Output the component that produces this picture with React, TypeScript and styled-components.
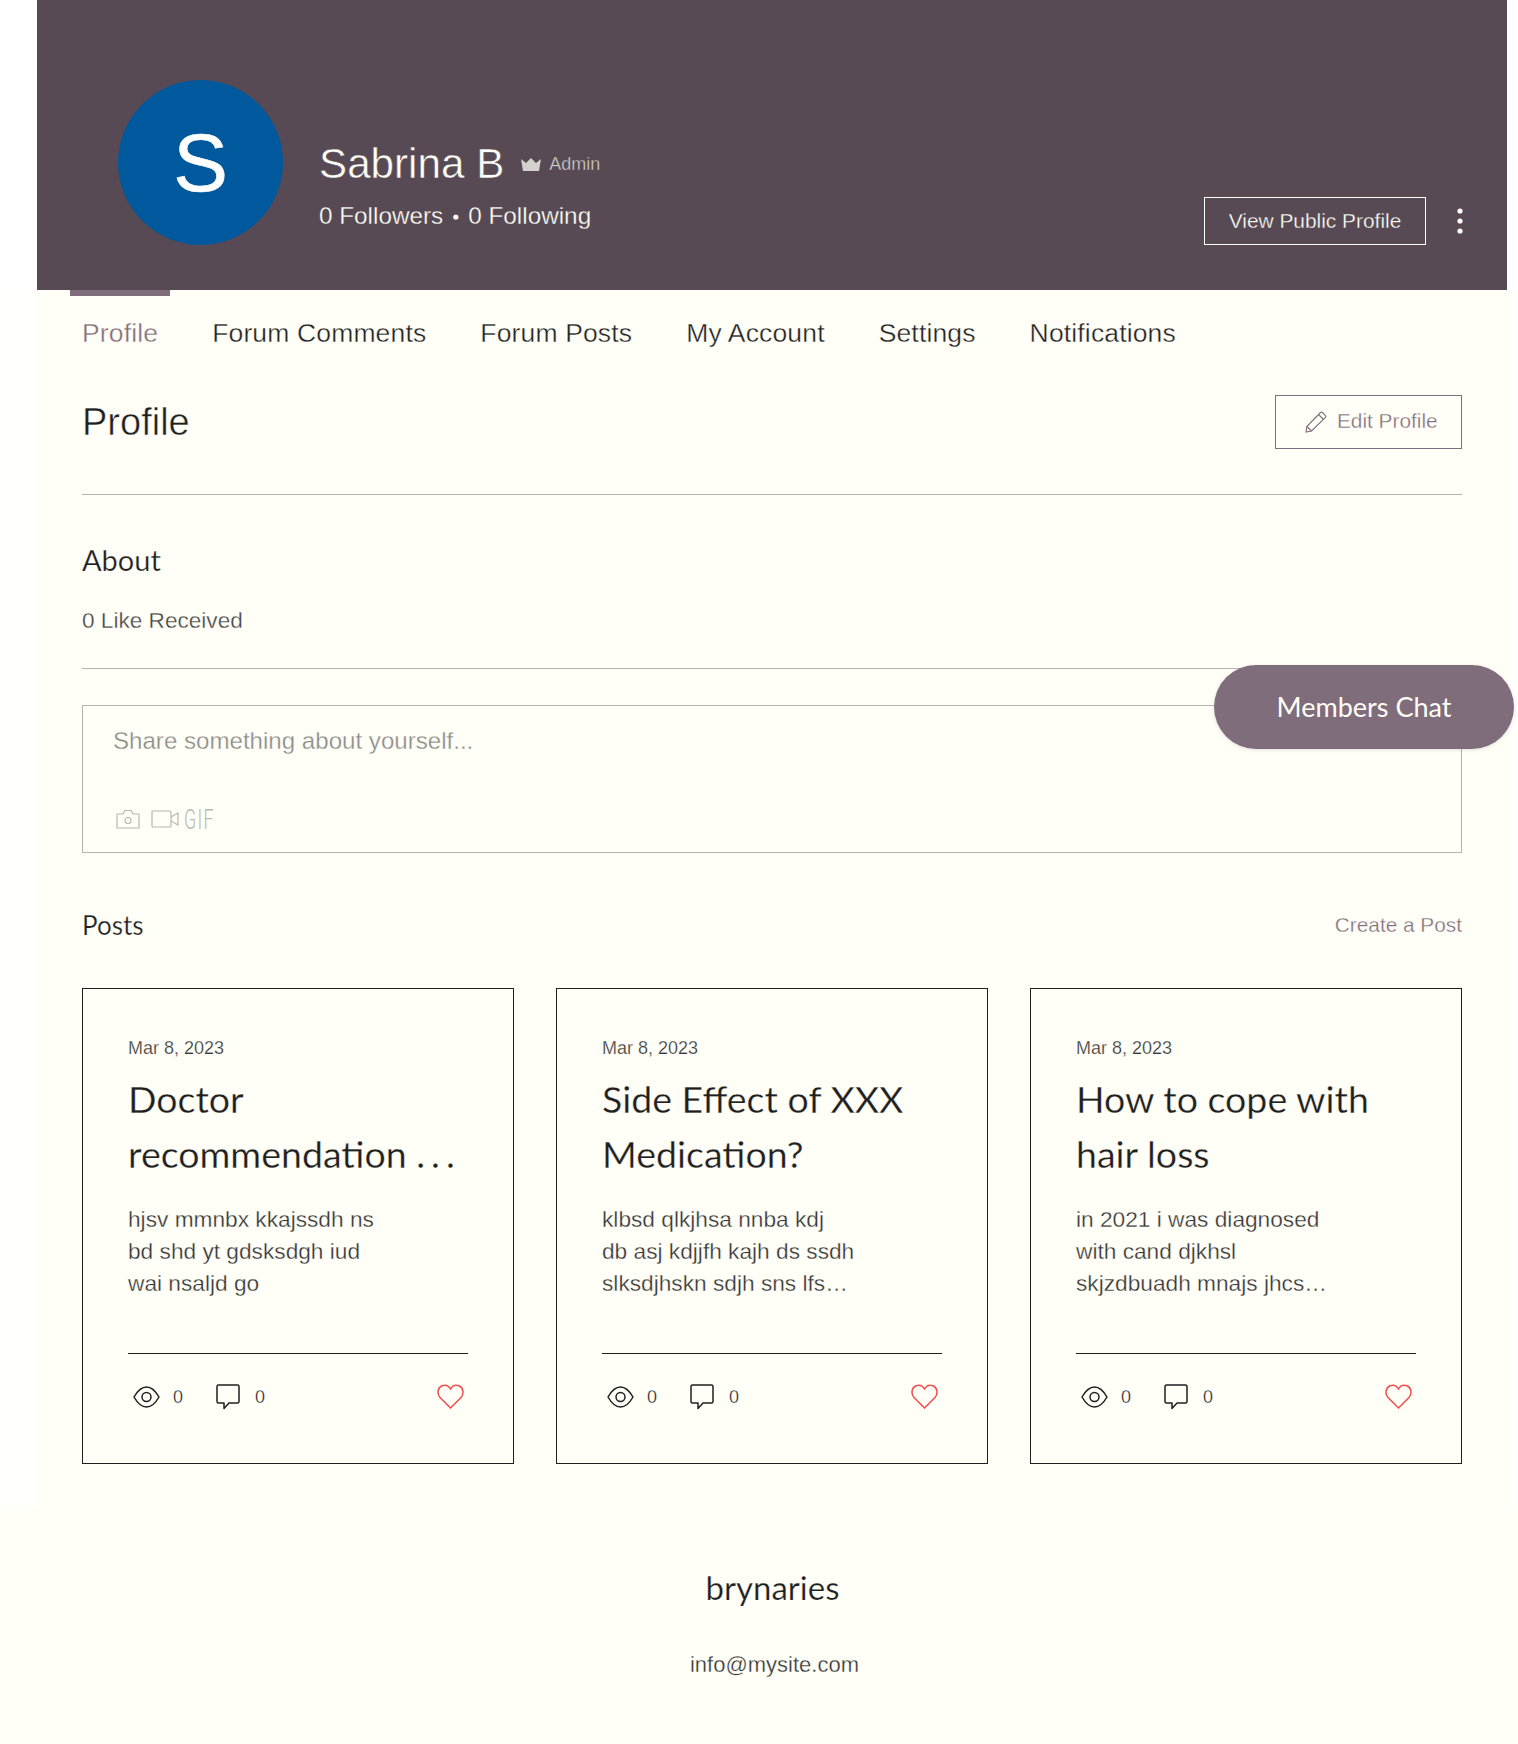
import React from "react";
import styled, { createGlobalStyle } from "styled-components";

const BODY = `"Liberation Sans", Arial, sans-serif`;
const DISPLAY = `"Lato", "Noto Sans", sans-serif`;
const CREAM = "#fffff7";
const BANNER = "#574a54";
const INK = "#1f1f1f";
const MAUVE = "#806d7c";
const RULE = "#b4b4ae";

/* Liberation Sans has the reference's letter shapes but a heavier stroke:
   a hairline in the background colour brings it to the light weight. */
const thin = (bg: string, w = 0.3) => `-webkit-text-stroke: ${w}px ${bg};`;

const Global = createGlobalStyle`
  * { box-sizing: border-box; }
  html, body { margin: 0; padding: 0; background: #fff; }
  body { font-family: ${BODY}; color: ${INK}; }
`;

const Page = styled.div`
  position: relative;
  width: 1518px;
  height: 1744px;
  overflow: hidden;
  background: ${CREAM};
`;
const Main = styled.main`
  margin: 0 11px 0 37px;
  background: ${CREAM};
  box-shadow: -37px 0 0 #fffffc, 11px 0 0 #fffffc;
`;
const Banner = styled.header`
  height: 290px;
  background: ${BANNER};
  box-shadow: -37px 0 0 #fff, 11px 0 0 #fff;
  display: flex;
  align-items: flex-start;
  padding: 80px 0 0 81px;
  color: ${CREAM};
`;
const Avatar = styled.div`
  width: 165px;
  height: 165px;
  border-radius: 50%;
  background: #00599c;
  color: #fff;
  display: flex;
  align-items: center;
  justify-content: center;
  font: 400 82px/1 ${BODY};
  -webkit-text-stroke: 0.6px #fff;
  flex: none;
`;
const Identity = styled.div`
  margin: 56px 0 0 36px;
  display: flex;
  flex-direction: column;
`;
const NameRow = styled.div`
  display: flex;
  align-items: center;
  height: 56px;
`;
const Name = styled.h1`
  margin: 0;
  font: 400 42.2px/56px ${BODY};
  ${thin(BANNER, 0.5)}
`;
const Badge = styled.span`
  display: flex;
  align-items: center;
  gap: 8px;
  margin-left: 17px;
  font: 400 18px/24px ${BODY};
  ${thin(BANNER)}
  color: #d3d0ce;
`;
const Follow = styled.div`
  margin-top: 7px;
  font: 400 24.3px/34px ${BODY};
  ${thin(BANNER)}
`;
const Bullet = styled.span`
  margin: 0 9px;
  font-size: 20px;
`;
const BannerActions = styled.div`
  margin: 117px 0 0 auto;
  display: flex;
  align-items: center;
  padding-right: 44px;
`;
const PublicButton = styled.button`
  width: 222px;
  height: 48px;
  background: transparent;
  border: 1px solid ${CREAM};
  color: ${CREAM};
  font: 400 20.9px/1 ${BODY};
  ${thin(BANNER)}
  padding: 0;
`;
const MoreDots = styled.svg`
  margin-left: 31px;
`;
const Tabs = styled.nav`
  display: flex;
  gap: 30px;
  padding-left: 33px;
  height: 80px;
`;
const Tab = styled.a<{ $active?: boolean }>`
  display: flex;
  align-items: center;
  padding: 0 12px;
  height: 80px;
  border-top: 6px solid ${(p) => (p.$active ? MAUVE : "transparent")};
  color: ${(p) => (p.$active ? MAUVE : INK)};
  font: 400 26.5px/1 ${BODY};
  letter-spacing: 0.15px;
  ${thin(CREAM, 0.35)}
`;
const Content = styled.div`
  padding: 25px 45px 44px;
`;
const TitleRow = styled.div`
  display: flex;
  justify-content: space-between;
  align-items: center;
  height: 54px;
`;
const PageTitle = styled.h2`
  margin: 0;
  font: 400 38px/54px ${BODY};
  ${thin(CREAM, 0.5)}
`;
const EditButton = styled.button`
  width: 187px;
  height: 54px;
  padding: 0 0 1px 29px;
  display: flex;
  align-items: center;
  gap: 10px;
  background: transparent;
  border: 1px solid ${MAUVE};
  color: ${MAUVE};
  font: 400 20.8px/1 ${BODY};
  ${thin(CREAM)}
`;
const Rule = styled.hr<{ $top: number }>`
  margin: ${(p) => p.$top}px 0 0;
  border: 0;
  height: 1px;
  background: ${RULE};
`;
const SectionTitle = styled.h3<{ $size: number }>`
  margin: 0;
  font: 400 ${(p) => p.$size}px/40px ${DISPLAY};
  ${thin(CREAM, 0.25)}
  color: ${INK};
`;
const About = styled.div`
  margin-top: 45px;
`;
const Likes = styled.p`
  margin: 26px 0 0;
  font: 400 22.6px/30px ${BODY};
  ${thin(CREAM)}
  color: #444;
`;
const Composer = styled.div`
  margin-top: 36px;
  height: 148px;
  border: 1px solid ${RULE};
  padding: 20px 30px 0;
`;
const Placeholder = styled.div`
  font: 400 24.1px/30px ${BODY};
  ${thin(CREAM)}
  color: #8a8a86;
`;
const ComposerTools = styled.div`
  margin: 51px 0 0 3px;
  display: flex;
  align-items: center;
  height: 24px;
  color: #b8b8b2;
`;
const ToolGap = styled.span`
  width: 11px;
`;
const Gif = styled.span`
  display: inline-block;
  margin-left: 5px;
  position: relative;
  top: 1px;
  font: 300 27px/24px "Roboto", ${BODY};
  letter-spacing: 2px;
  transform: scaleX(0.66);
  transform-origin: left center;
`;
const PostsHead = styled.div`
  margin-top: 52px;
  display: flex;
  justify-content: space-between;
  align-items: center;
  height: 40px;
`;
const CreateLink = styled.a`
  font: 400 20.8px/1 ${BODY};
  ${thin(CREAM)}
  color: ${MAUVE};
`;
const CardGrid = styled.div`
  margin-top: 43px;
  display: grid;
  grid-template-columns: repeat(3, 432px);
  gap: 42px;
`;
const Card = styled.article`
  height: 476px;
  border: 1px solid ${INK};
  padding: 47px 45px 0;
  display: flex;
  flex-direction: column;
`;
const PostDate = styled.div`
  font: 400 18px/24px ${BODY};
  ${thin(CREAM, 0.25)}
  color: #333;
`;
const PostTitle = styled.h4`
  margin: 11px 0 0;
  font: 400 37.5px/55px ${DISPLAY};
  ${thin(CREAM, 0.3)}
  color: ${INK};
  white-space: pre-line;
`;
const TitleDots = styled.span`
  letter-spacing: 6px;
`;
const Excerpt = styled.p`
  margin: 22px 0 0;
  font: 400 22.7px/32px ${BODY};
  ${thin(CREAM)}
  color: #333;
  white-space: pre-line;
`;
const CardFooter = styled.div`
  margin-top: auto;
  height: 110px;
  border-top: 1px solid ${INK};
  display: flex;
  align-items: flex-start;
  padding: 30px 4px 0 5px;
`;
const Stat = styled.span<{ $gap: number; $left?: number }>`
  display: flex;
  align-items: center;
  gap: ${(p) => p.$gap}px;
  margin-left: ${(p) => p.$left ?? 0}px;
  height: 25px;
`;
const Count = styled.span`
  font: 400 18px/1 ${BODY};
  ${thin(CREAM)}
`;
const Heart = styled.svg`
  margin-left: auto;
`;
const Footer = styled.footer`
  height: 236px;
  display: flex;
  flex-direction: column;
  align-items: center;
  padding: 59px 0 0 31px;
`;
const Brand = styled.div`
  margin-left: -4px;
  font: 400 33px/40px ${DISPLAY};
  ${thin(CREAM, 0.25)}
`;
const Mail = styled.div`
  margin-top: 43px;
  font: 400 22px/30px ${BODY};
  ${thin(CREAM)}
  color: #333;
`;
const ChatPill = styled.button`
  position: absolute;
  left: 1214px;
  top: 665px;
  width: 300px;
  height: 84px;
  border: 0;
  padding: 0 0 2px;
  border-radius: 42px;
  background: ${MAUVE};
  color: ${CREAM};
  font: 400 27px/1 ${DISPLAY};
  box-shadow: 0 1px 4px rgba(0, 0, 0, 0.12);
`;

const Crown = () => (
  <svg width="20" height="13" viewBox="0 0 20 13" fill="#d3d0ce">
    <path d="M0 1 L5 5 L10 0 L15 5 L20 1 L18 13 H2 Z" />
  </svg>
);
const Pencil = () => (
  <svg width="22" height="22" viewBox="0 0 22 22" fill="none" stroke={MAUVE} strokeWidth="1.1">
    <path d="M1 21 L1.8 15.5 L15.5 1.5 Q16.5 .7 17.5 1.5 L20.5 4.5 Q21.2 5.5 20.4 6.5 L6.6 20 Z" />
    <path d="M13.5 3.5 L18.5 8.5 M1.8 15.5 L6.6 20" />
  </svg>
);
const Camera = () => (
  <svg width="24" height="20" viewBox="0 0 24 20" fill="none" stroke="#b8b8b2" strokeWidth="1.2">
    <path d="M1 5 H7 L9 1.5 H15 L17 5 H23 V19 H1 Z" strokeLinejoin="round" />
    <circle cx="12" cy="11.5" r="3" />
  </svg>
);
const Video = () => (
  <svg width="28" height="18" viewBox="0 0 28 18" fill="none" stroke="#b8b8b2" strokeWidth="1.2">
    <rect x="1" y="1" width="19" height="16" rx="1" />
    <path d="M20 7 L27 3 V15 L20 11" />
  </svg>
);
const Eye = () => (
  <svg width="27" height="22" viewBox="0 0 27 22" fill="none" stroke={INK} strokeWidth="1.5">
    <path d="M1 11 C5 4 9 1 13.5 1 S22 4 26 11 C22 18 18 21 13.5 21 S5 18 1 11 Z" />
    <circle cx="13.5" cy="11" r="4.5" />
  </svg>
);
const Bubble = () => (
  <svg width="24" height="26" viewBox="0 0 24 26" fill="none" stroke={INK} strokeWidth="1.5" strokeLinejoin="round">
    <path d="M2.5 1 H21.5 Q23 1 23 2.5 V17.5 Q23 19 21.5 19 H13 L8 24.5 V19 H2.5 Q1 19 1 17.5 V2.5 Q1 1 2.5 1 Z" />
  </svg>
);

const posts = [
  {
    id: "doctor",
    title: (
      <>
        {"Doctor\nrecommendation "}
        <TitleDots>...</TitleDots>
      </>
    ),
    text: "hjsv mmnbx kkajssdh ns\nbd shd yt gdsksdgh iud\nwai nsaljd go",
  },
  {
    id: "side",
    title: "Side Effect of XXX\nMedication?",
    text: "klbsd qlkjhsa nnba kdj\ndb asj kdjjfh kajh ds ssdh\nslksdjhskn sdjh sns lfs…",
  },
  {
    id: "hair",
    title: "How to cope with\nhair loss",
    text: "in 2021 i was diagnosed\nwith cand djkhsl\nskjzdbuadh mnajs jhcs…",
  },
];
const tabs = ["Profile", "Forum Comments", "Forum Posts", "My Account", "Settings", "Notifications"];

export default function App() {
  return (
    <Page>
      <Global />
      <Main>
        <Banner>
          <Avatar>S</Avatar>
          <Identity>
            <NameRow>
              <Name>Sabrina B</Name>
              <Badge>
                <Crown />
                Admin
              </Badge>
            </NameRow>
            <Follow>
              0 Followers<Bullet>•</Bullet>0 Following
            </Follow>
          </Identity>
          <BannerActions>
            <PublicButton>View Public Profile</PublicButton>
            <MoreDots width="6" height="26" viewBox="0 0 6 26" fill={CREAM}>
              <circle cx="3" cy="3" r="2.6" />
              <circle cx="3" cy="13" r="2.6" />
              <circle cx="3" cy="23" r="2.6" />
            </MoreDots>
          </BannerActions>
        </Banner>
        <Tabs>
          {tabs.map((t, i) => (
            <Tab key={t} $active={i === 0}>
              {t}
            </Tab>
          ))}
        </Tabs>
        <Content>
          <TitleRow>
            <PageTitle>Profile</PageTitle>
            <EditButton>
              <Pencil />
              Edit Profile
            </EditButton>
          </TitleRow>
          <Rule $top={45} />
          <About>
            <SectionTitle $size={29}>About</SectionTitle>
            <Likes>0 Like Received</Likes>
          </About>
          <Rule $top={32} />
          <Composer>
            <Placeholder>Share something about yourself...</Placeholder>
            <ComposerTools>
              <Camera />
              <ToolGap />
              <Video />
              <Gif>GIF</Gif>
            </ComposerTools>
          </Composer>
          <PostsHead>
            <SectionTitle $size={26}>Posts</SectionTitle>
            <CreateLink>Create a Post</CreateLink>
          </PostsHead>
          <CardGrid>
            {posts.map((p) => (
              <Card key={p.id}>
                <PostDate>Mar 8, 2023</PostDate>
                <PostTitle>{p.title}</PostTitle>
                <Excerpt>{p.text}</Excerpt>
                <CardFooter>
                  <Stat $gap={13}>
                    <Eye />
                    <Count>0</Count>
                  </Stat>
                  <Stat $gap={15} $left={33}>
                    <Bubble />
                    <Count>0</Count>
                  </Stat>
                  <Heart width="27" height="25" viewBox="0 0 27 25" fill="none" stroke="#f24d4d" strokeWidth="1.5">
                    <path d="M13.5 24 L3 13.5 C-0.5 9.5 0.8 3.5 5 1.8 C8.5 0.4 11.8 2 13.5 5 C15.2 2 18.5 0.4 22 1.8 C26.2 3.5 27.5 9.5 24 13.5 Z" />
                  </Heart>
                </CardFooter>
              </Card>
            ))}
          </CardGrid>
        </Content>
      </Main>
      <Footer>
        <Brand>brynaries</Brand>
        <Mail>info@mysite.com</Mail>
      </Footer>
      <ChatPill>Members Chat</ChatPill>
    </Page>
  );
}
